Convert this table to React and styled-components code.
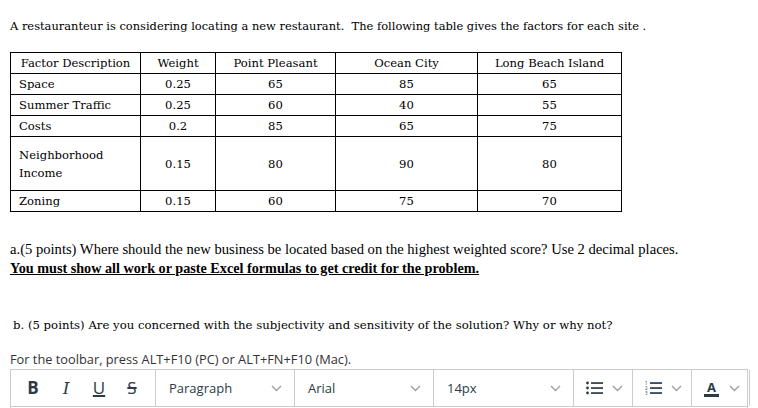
import styled, { createGlobalStyle } from "styled-components";

const GlobalStyle = createGlobalStyle`
  body {
    margin: 0;
    background: #fff;
    color: #000;
    font-family: "DejaVu Serif", "Liberation Serif", serif;
  }
`;

const Page = styled.div`
  padding: 18px 10px 0 10px;
  width: 758px;
  box-sizing: border-box;
  overflow: hidden;
  height: 408px;
`;

const Intro = styled.p`
  margin: 0 0 18px 0;
  font-size: 11.45px;
  line-height: 16px;
`;

const Table = styled.table`
  border-collapse: collapse;
  table-layout: fixed;
  width: 611px;
  font-size: 11.6px;
`;

const Th = styled.th`
  border: 1px solid #000;
  font-weight: normal;
  height: 20px;
  padding: 0 4px;
  text-align: center;
  line-height: 20px;
  white-space: nowrap;
`;

const Td = styled.td`
  border: 1px solid #000;
  height: ${(p) => (p.$tall ? 53 : 20)}px;
  padding: 0 8px;
  text-align: ${(p) => (p.$left ? "left" : "center")};
  line-height: ${(p) => (p.$tall ? 18 : 20)}px;
  vertical-align: middle;
`;

const QuestionA = styled.div`
  margin-top: 28px;
  font-family: "Liberation Serif", serif;
  font-size: 14.6px;
  line-height: 19px;
`;

const Underlined = styled.div`
  font-weight: bold;
  text-decoration: underline;
  font-size: 14.2px;
`;

const QuestionB = styled.p`
  margin: 39px 0 0 3px;
  font-size: 11.7px;
  line-height: 16px;
`;

const Hint = styled.div`
  margin-top: 17px;
  font-family: "Open Sans", sans-serif;
  font-size: 12.8px;
  color: #333;
  line-height: 18px;
`;

const Editor = styled.div`
  margin-top: 1px;
  border: 1px solid #ccc;
  border-bottom: none;
  height: 60px;
`;

const Toolbar = styled.div`
  display: flex;
  height: 36px;
  border-bottom: 1px solid #ccc;
  font-family: "Open Sans", sans-serif;
`;

const Group = styled.div`
  display: flex;
  align-items: center;
  width: ${(p) => p.$w}px;
  border-right: 1px solid #ccc;
  box-sizing: border-box;
  padding: ${(p) => p.$pad || "0 12px 0 13px"};
  justify-content: space-between;
  flex-shrink: 0;
`;

const FmtButton = styled.span`
  font-size: 17px;
  color: #2d3b45;
  width: 22px;
  text-align: center;
  font-weight: ${(p) => (p.$bold ? "bold" : "normal")};
  font-style: ${(p) => (p.$italic ? "italic" : "normal")};
  font-family: ${(p) => (p.$italic ? '"DejaVu Serif", serif' : '"Open Sans", sans-serif')};
  text-decoration: ${(p) => p.$deco || "none"};
  text-decoration-thickness: 2px;
  line-height: 20px;
`;

const SelectLabel = styled.span`
  font-size: 13px;
  color: #2d3b45;
`;

const Chevron = () => (
  <svg width="11" height="7" viewBox="0 0 11 7">
    <path d="M1 1l4.5 4.5L10 1" fill="none" stroke="#9aa0a6" strokeWidth="1.4" />
  </svg>
);

const BulletIcon = () => (
  <svg width="17" height="14" viewBox="0 0 17 14">
    <circle cx="1.5" cy="2" r="1.4" fill="#2d3b45" />
    <circle cx="1.5" cy="7" r="1.4" fill="#2d3b45" />
    <circle cx="1.5" cy="12" r="1.4" fill="#2d3b45" />
    <rect x="5" y="1.2" width="12" height="1.7" fill="#2d3b45" />
    <rect x="5" y="6.2" width="12" height="1.7" fill="#2d3b45" />
    <rect x="5" y="11.2" width="12" height="1.7" fill="#2d3b45" />
  </svg>
);

const NumberIcon = () => (
  <svg width="17" height="14" viewBox="0 0 17 14">
    <text x="0" y="3.5" fontSize="4.5" fontFamily="Open Sans" fill="#2d3b45">1</text>
    <text x="0" y="8.5" fontSize="4.5" fontFamily="Open Sans" fill="#2d3b45">2</text>
    <text x="0" y="13.5" fontSize="4.5" fontFamily="Open Sans" fill="#2d3b45">3</text>
    <rect x="5" y="1.2" width="12" height="1.7" fill="#2d3b45" />
    <rect x="5" y="6.2" width="12" height="1.7" fill="#2d3b45" />
    <rect x="5" y="11.2" width="12" height="1.7" fill="#2d3b45" />
  </svg>
);

const ColorA = styled.span`
  font-size: 13px;
  font-weight: bold;
  color: #2d3b45;
  border-bottom: 3px solid #2d3b45;
  padding: 0 3px;
  line-height: 14px;
`;

const rows = [
  ["Space", "0.25", "65", "85", "65"],
  ["Summer Traffic", "0.25", "60", "40", "55"],
  ["Costs", "0.2", "85", "65", "75"],
  ["Neighborhood", "0.15", "80", "90", "80"],
  ["Zoning", "0.15", "60", "75", "70"],
];

const colWidths = [130, 75, 120, 142, 144];

export default function App() {
  return (
    <Page>
      <GlobalStyle />
      <Intro>
        A restauranteur is considering locating a new restaurant.&nbsp; The following table gives the factors for each site .
      </Intro>
      <Table>
        <colgroup>
          {colWidths.map((w, i) => (
            <col key={i} style={{ width: w }} />
          ))}
        </colgroup>
        <thead>
          <tr>
            <Th>Factor Description</Th>
            <Th>Weight</Th>
            <Th>Point Pleasant</Th>
            <Th>Ocean City</Th>
            <Th>Long Beach Island</Th>
          </tr>
        </thead>
        <tbody>
          {rows.map((r) => (
            <tr key={r[0]}>
              <Td $left $tall={r[0] === "Neighborhood"}>
                {r[0] === "Neighborhood" ? (
                  <>
                    Neighborhood
                    <br />
                    Income
                  </>
                ) : (
                  r[0]
                )}
              </Td>
              <Td>{r[1]}</Td>
              <Td>{r[2]}</Td>
              <Td>{r[3]}</Td>
              <Td>{r[4]}</Td>
            </tr>
          ))}
        </tbody>
      </Table>
      <QuestionA>
        a.(5 points) Where should the new business be located based on the highest weighted score? Use 2 decimal places.
        <Underlined>You must show all work or paste Excel formulas to get credit for the problem.</Underlined>
      </QuestionA>
      <QuestionB>
        b. (5 points) Are you concerned with the subjectivity and sensitivity of the solution? Why or why not?
      </QuestionB>
      <Hint>For the toolbar, press ALT+F10 (PC) or ALT+FN+F10 (Mac).</Hint>
      <Editor>
        <Toolbar>
          <Group $w={145} $pad="0 12px 0 11px">
            <FmtButton $bold>B</FmtButton>
            <FmtButton $italic>I</FmtButton>
            <FmtButton $deco="underline">U</FmtButton>
            <FmtButton $deco="line-through">S</FmtButton>
          </Group>
          <Group $w={139}>
            <SelectLabel>Paragraph</SelectLabel>
            <Chevron />
          </Group>
          <Group $w={139}>
            <SelectLabel>Arial</SelectLabel>
            <Chevron />
          </Group>
          <Group $w={140}>
            <SelectLabel>14px</SelectLabel>
            <Chevron />
          </Group>
          <Group $w={59} $pad="0 9px 0 12px">
            <BulletIcon />
            <Chevron />
          </Group>
          <Group $w={59} $pad="0 9px 0 12px">
            <NumberIcon />
            <Chevron />
          </Group>
          <Group $w={58} $pad="0 9px 0 12px">
            <ColorA>A</ColorA>
            <Chevron />
          </Group>
          <Group $w={40} />
        </Toolbar>
      </Editor>
    </Page>
  );
}
